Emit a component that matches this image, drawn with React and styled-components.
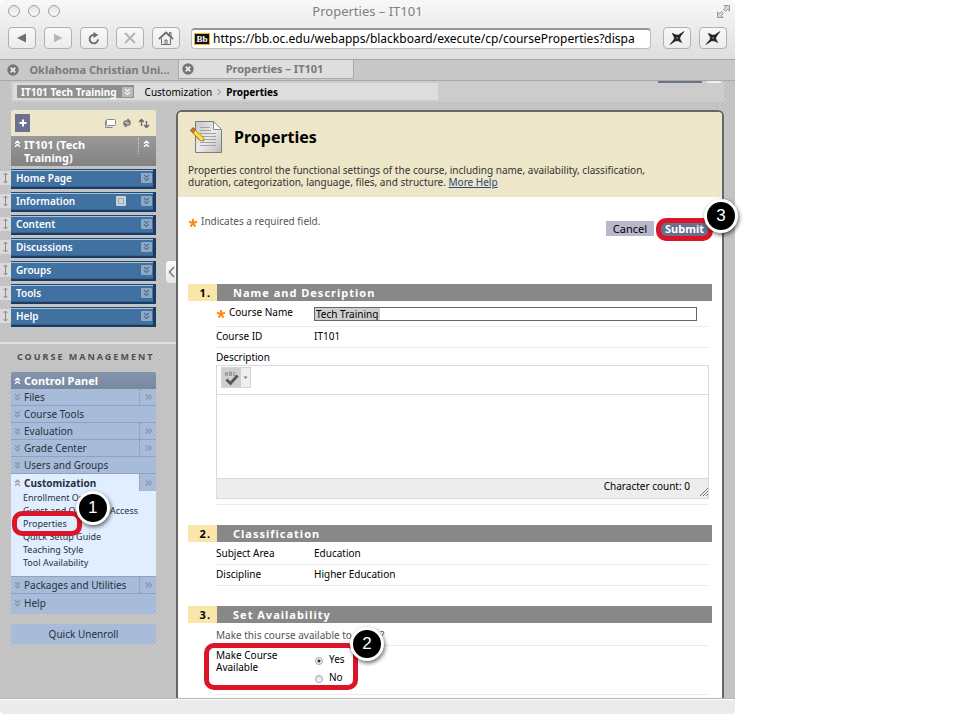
import { useState } from "react";
import styled, { createGlobalStyle, css } from "styled-components";

const COLORS = {
  beige: "#ede6c8",
  bar: "#888888",
  blue: "#4071a1",
  panel: "#a8bbd9",
  open: "#e0eeff",
  red: "#dc1428",
  frame: "#666666",
};

const GlobalStyle = createGlobalStyle`
  * {
    box-sizing: border-box;
  }
  body {
    margin: 0;
    background: #ffffff;
    color: #000000;
    font-family: "Noto Sans", sans-serif;
    font-size: 10px;
    line-height: 12px;
  }
  button, input, textarea {
    font: inherit;
    color: inherit;
    margin: 0;
    padding: 0;
    border: 0;
    background: none;
  }
  a {
    color: inherit;
    text-decoration: none;
  }
  svg {
    display: block;
    flex: none;
  }
  h1, h2, h3, p, ul, dl, dd {
    margin: 0;
    padding: 0;
    list-style: none;
  }
`;

const stripes = css`
  background: linear-gradient(
      135deg,
      #bebebe 25%,
      #c9c9c9 25% 50%,
      #bebebe 50% 75%,
      #c9c9c9 75%
    )
    0 0 / 4px 4px;
`;

const Desktop = styled.div`
  height: 100vh;
  padding-right: 235px;
`;

const Window = styled.div`
  display: flex;
  flex-direction: column;
  height: 100%;
  border-radius: 5px 5px 4px 4px;
`;

/* browser chrome */

const Chrome = styled.header`
  flex: none;
  background: linear-gradient(#f8f8f8, #dedede);
  border-bottom: 1px solid #a6a6a6;
  border-radius: 5px 5px 0 0;
`;

const TitleBar = styled.div`
  display: grid;
  grid-template-columns: 60px 1fr 64px;
  align-items: center;
  height: 24px;
  padding: 0 4px 2px 8px;
  color: #808080;
  font-size: 13px;
  line-height: 16px;
  text-align: center;
`;

const Lights = styled.div`
  display: flex;
  gap: 8px;
`;

const Light = styled.button`
  width: 12px;
  height: 12px;
  border: 1px solid #a2a2a2;
  border-radius: 50%;
  background: linear-gradient(#e2e2e2, #fafafa);
`;

const Expand = styled.button`
  justify-self: end;
`;

const Toolbar = styled.div`
  display: flex;
  align-items: center;
  gap: 8px;
  height: 35px;
  padding: 0 8px 8px;
`;

const ToolButton = styled.button`
  display: flex;
  flex: none;
  align-items: center;
  justify-content: center;
  width: 28px;
  height: 22px;
  margin-top: 1px;
  border: 1px solid #b0b0b0;
  border-radius: 4px;
  background: linear-gradient(#f8f8f8, #ececec);
`;

const Address = styled.label`
  display: flex;
  flex: 1;
  align-items: center;
  gap: 3px;
  min-width: 0;
  height: 21px;
  margin: 1px 4px 0 3px;
  padding: 0 1px 0 2px;
  border: 1px solid #bdbdbd;
  border-top: 2px solid #969696;
  border-radius: 4px;
  background: #ffffff;
`;

const Favicon = styled.span`
  flex: none;
  width: 16px;
  height: 12px;
  border: 1px solid #e6b222;
  background: #111111;
  color: #ffffff;
  font: bold 9px/10px "Liberation Serif", serif;
  text-align: center;
`;

const AddressInput = styled.input`
  flex: 1;
  min-width: 0;
  outline: none;
  font-size: 12px;
  line-height: 16px;
`;

const Tabs = styled.nav`
  display: flex;
  flex: none;
  height: 21px;
  border-bottom: 1px solid #a9a9a9;
  background: #c8c8c8;
`;

const Tab = styled.div`
  display: flex;
  align-items: center;
  gap: 6px;
  width: ${(props) => (props.$active ? 176 : 178)}px;
  height: ${(props) => (props.$active ? 19 : 20)}px;
  padding: 0 4px 0 7px;
  background: ${(props) => (props.$active ? "#dedede" : "#c8c8c8")};
  border: solid #a9a9a9;
  border-width: ${(props) => (props.$active ? "0 1px 1px" : "0")};
  color: #7a7a7a;
  font-size: 11px;
  font-weight: 700;
  white-space: nowrap;

  ${(props) => props.$active && "padding-left: 3px;"}
  a {
    flex: 1;
    text-align: center;
  }
`;

/* page */

const Page = styled.div`
  flex: 1;
  min-height: 0;
  overflow-x: visible;
  overflow-y: clip;
  ${stripes}
`;

const CrumbBar = styled.div`
  display: flex;
  justify-content: space-between;
  height: 21px;
  margin: 0 11px 0 11px;
  padding: 2px 3px 0 2px;
  background: #cccccc;
`;

const Crumbs = styled.nav`
  display: flex;
  align-items: center;
  width: 425px;
  height: 17px;
  padding-left: 4px;
  background: #dddddd;
  white-space: nowrap;
`;

const CourseCrumb = styled.button`
  display: flex;
  align-items: center;
  gap: 5px;
  height: 13px;
  margin-right: 11px;
  padding: 0 1px 0 4px;
  background: #909090;
  color: #ffffff;
  font-weight: 700;
`;

const Stubs = styled.div`
  display: flex;
  gap: 5px;
  margin-top: -2px;
`;

const Stub = styled.i`
  width: ${(props) => props.$width}px;
  height: 2px;
  background: ${(props) => props.$color};
`;

const Columns = styled.div`
  display: flex;
  align-items: stretch;
  height: calc(100% - 21px);
  padding: 8px 11px 0 0;
`;

const Sidebar = styled.aside`
  flex: none;
  width: 176px;
  position: relative;
`;

const Collapse = styled.button`
  display: flex;
  align-items: center;
  justify-content: center;
  position: absolute;
  right: 0;
  top: 151px;
  width: 10px;
  height: 22px;
  border-radius: 4px 0 0 4px;
  background: linear-gradient(#fdfdfd, #e6e6e6);
`;

const MenuTop = styled.div`
  display: flex;
  align-items: center;
  gap: 6px;
  height: 26px;
  margin: 0 20px 0 11px;
  padding: 0 6px 0 4px;
  border-radius: 2px 2px 0 0;
  background: ${COLORS.beige};
`;

const AddButton = styled.button`
  display: flex;
  align-items: center;
  justify-content: center;
  width: 15px;
  height: 18px;
  margin-right: auto;
  background: #6d7190;
`;

const CourseHead = styled.h3`
  display: flex;
  align-items: flex-start;
  gap: 3px;
  height: 30px;
  margin: 0 20px 3px 11px;
  padding: 2px 6px 0 3px;
  background: linear-gradient(#999999, #828282);
  color: #ffffff;
  font-size: 11px;
  line-height: 13px;

  span {
    flex: 1;
  }
  svg {
    margin-top: 2px;
  }
`;

const HeadToggle = styled.span`
  && {
    flex: none;
    height: 16px;
    padding-left: 4px;
    border-left: 1px dotted #cccccc;
  }
`;

const MenuRow = styled.li`
  display: flex;
  height: 20px;
  margin: 0 20px 3px 0;
`;

const Grip = styled.span`
  display: flex;
  align-items: center;
  justify-content: center;
  width: 11px;
  height: 14px;
  margin-top: 2px;
  background: #dadada;
`;

const MenuItem = styled.div`
  display: flex;
  flex: 1;
  align-items: center;
  gap: 15px;
  padding: 0 1px 2px 5px;
  border-top: 1px solid #1f4a76;
  border-right: 3px solid #1b3b60;
  border-bottom: 2px solid #1b3b60;
  background: ${COLORS.blue};
  box-shadow: inset 0 1px #a9c3dc, inset 0 -1px #336294;
  color: #ffffff;
  font-weight: 600;

  a {
    flex: 1;
  }
`;

const Rule = styled.hr`
  height: 2px;
  margin: 15px 0 0;
  border: 0;
  background: #dedede;
`;

const ManagementTitle = styled.h3`
  margin: 7px 0 9px 17px;
  color: #505050;
  font-size: 9px;
  font-weight: 700;
  line-height: 12px;
  letter-spacing: 2px;
  white-space: nowrap;
`;

const Panel = styled.div`
  margin: 0 20px 0 11px;
  border-radius: 2px;
  background: ${COLORS.panel};
  color: #26313f;
`;

const PanelRow = styled.div`
  display: flex;
  align-items: center;
  gap: 3px;
  height: 17px;
  padding-left: 3px;
  border-bottom: ${(props) => (props.$plain ? "0" : "1px solid #8ea3c4")};
  background: ${(props) => (props.$open ? COLORS.open : "transparent")};
  font-weight: ${(props) => (props.$open ? 700 : 400)};

  a {
    flex: 1;
  }
  &:last-child {
    margin-bottom: 3px;
  }
`;

const PanelHead = styled(PanelRow)`
  background: linear-gradient(#8394ad, #78899f);
  border-bottom: 0;
  border-radius: 2px 2px 0 0;
  color: #ffffff;
  font-size: 11px;
  font-weight: 700;
`;

const PanelFoot = styled.div`
  height: 3px;
`;

const More = styled.button`
  display: flex;
  align-items: center;
  justify-content: center;
  align-self: stretch;
  width: 17px;
  border-left: 1px dotted #8094b4;
  background: ${COLORS.panel};
`;

const SubList = styled.ul`
  height: 86px;
  padding-left: 12px;
  border-bottom: 1px solid #8ea3c4;
  background: ${COLORS.open};
  font-size: 9px;
  line-height: 13px;
`;

const SubItem = styled.li`
  position: relative;
  width: max-content;
`;

const Unenroll = styled.button`
  width: 145px;
  height: 20px;
  margin: 10px 0 0 11px;
  border-radius: 2px;
  background: ${COLORS.panel};
  color: #26313f;
`;

/* numbered callouts that lie over the page */

const Ring = styled.i`
  position: absolute;
  z-index: 1;
  inset: ${(props) => props.$inset};
  border: 5px solid ${COLORS.red};
  border-radius: 10px;
  pointer-events: none;
`;

const Badge = styled.b`
  position: absolute;
  z-index: 2;
  top: ${(props) => props.$top}px;
  right: ${(props) => props.$right}px;
  width: 34px;
  height: 34px;
  border: 3px solid #ffffff;
  border-radius: 50%;
  background: #000000;
  box-shadow: 1px 2px 4px rgba(0, 0, 0, 0.6);
  color: #ffffff;
  font: 17px/28px "Liberation Sans", sans-serif;
  text-align: center;
`;

/* main column */

const Main = styled.main`
  flex: 1;
  min-width: 0;
  border: 2px solid ${COLORS.frame};
  border-bottom: 0;
  border-radius: 6px 6px 0 0;
  background: #ffffff;
`;

const Intro = styled.div`
  height: 85px;
  padding: 9px 10px 0;
  border-radius: 4px 4px 0 0;
  background: ${COLORS.beige};
  color: #333333;
`;

const Heading = styled.div`
  display: flex;
  align-items: center;
  gap: 11px;
  height: 32px;
  margin: 0 0 11px 2px;
  color: #000000;

  h1 {
    font-size: 16px;
    line-height: 20px;
  }
`;

const HelpLink = styled.a`
  color: #2a4a76;
  text-decoration: underline;
`;

const Actions = styled.div`
  display: flex;
  align-items: flex-start;
  justify-content: space-between;
  height: 87px;
  padding: 18px 14px 0 10px;
  color: #555555;
`;

const Required = styled.p`
  display: flex;
  align-items: flex-start;
  gap: 3px;

  svg {
    margin-top: 3px;
  }
`;

const Buttons = styled.div`
  display: flex;
  gap: 7px;
  padding-top: 6px;
`;

const Action = styled.button`
  position: relative;
  height: 15px;
  padding: 0 ${(props) => (props.$primary ? 4 : 7)}px;
  background: ${(props) => (props.$primary ? "#66708c" : "#b9b7cd")};
  color: ${(props) => (props.$primary ? "#ffffff" : "#000000")};
  font-size: 11px;
  font-weight: ${(props) => (props.$primary ? 700 : 400)};
`;

const SectionHead = styled.h2`
  display: flex;
  height: 17px;
  margin: 0 10px;
  background: ${COLORS.bar};
  color: #ffffff;
  font-size: 11px;
  font-weight: 700;
  line-height: 17px;
  letter-spacing: 1px;

  span {
    width: 29px;
    margin-right: 16px;
    padding-right: 6px;
    background: #fae6a8;
    color: #000000;
    text-align: right;
  }
`;

const SectionBody = styled.div`
  margin: 0 13px 0 38px;
  padding-bottom: 20px;
`;

const Field = styled.div`
  display: grid;
  grid-template-columns: 98px 1fr;
  min-height: ${(props) => props.$height || 21}px;
  padding: ${(props) => props.$pad || 3}px 0 0;
  border-bottom: 1px solid #ececec;
`;

const FieldLabel = styled.label`
  display: flex;
  align-items: flex-start;
  gap: 3px;

  svg {
    margin-top: 3px;
  }
`;

const NameInput = styled.input`
  width: 383px;
  max-width: 100%;
  height: 14px;
  margin-top: 1px;
  padding-left: 1px;
  border: 1px solid #666666;
  outline: none;
  background: linear-gradient(#d0d0d0, #d0d0d0) no-repeat 0 0 / 65px 100%;
`;

const DescriptionLabel = styled.label`
  display: block;
  padding: 3px 0 2px;
`;

const Editor = styled.div`
  border: 1px solid #dadada;
`;

const EditorTools = styled.div`
  height: 29px;
  padding: 1px 4px;
  border-bottom: 1px solid #dadada;
`;

const SpellButton = styled.button`
  display: flex;
  width: 30px;
  height: 21px;
  border: 1px solid #d4d4d4;
  background: #eeeeee;
`;

const EditorText = styled.textarea`
  display: block;
  width: 100%;
  height: 83px;
  outline: none;
  resize: none;
`;

const EditorFoot = styled.div`
  display: flex;
  justify-content: flex-end;
  gap: 10px;
  height: 20px;
  padding: 1px 0 2px;
  border-top: 1px solid #dadada;
  background: #ededed;

  svg {
    align-self: flex-end;
  }
`;

const EditorEnd = styled.div`
  height: 6px;
  border-bottom: 1px solid #ececec;
`;

const Question = styled.p`
  height: 23px;
  padding-top: 6px;
  border-bottom: 1px solid #ececec;
  color: #555555;
`;

const Choice = styled.fieldset`
  display: grid;
  grid-template-columns: 98px 1fr;
  position: relative;
  height: 49px;
  margin: 0;
  padding: 3px 0 0;
  border: 0;
  border-bottom: 1px solid #ececec;

  div {
    display: flex;
    flex-direction: column;
    gap: 6px;
    padding-top: 4px;
  }
  label {
    display: flex;
    align-items: center;
    gap: 6px;
    width: max-content;
  }
`;

const Radio = styled.input`
  appearance: none;
  width: 8px;
  height: 8px;
  margin: 4px 0 0 1px;
  border: 1px solid #a2a2a2;
  border-radius: 50%;
  background: ${(props) =>
    props.checked
      ? "radial-gradient(#333333 0 1px, #f4f4f4 2px)"
      : "linear-gradient(#dddddd, #ffffff)"};
`;

const StatusBar = styled.footer`
  flex: none;
  height: 16px;
  border-top: 1px solid #b5b5b5;
  border-radius: 0 0 4px 4px;
  background: #ebebeb;
  box-shadow: inset 0 1px #ffffff;
`;

/* icons */

const Chevrons = ({ color = "#ffffff", turn = 0 }) => (
  <svg width="7" height="8" viewBox="0 0 7 8">
    <path
      d="M1 3.5 3.5 1.2 6 3.5M1 6.7 3.5 4.4 6 6.7"
      fill="none"
      stroke={color}
      strokeWidth="1.4"
      transform={`rotate(${turn} 3.5 4)`}
    />
  </svg>
);

const DropChevron = ({ back = "#8fa9c4", ink = "#4f7396" }) => (
  <svg width="11" height="10" viewBox="0 0 11 10">
    <rect width="11" height="10" rx="1" fill={back} />
    <path d="M3 2 5.5 4.3 8 2M3 5.2 5.5 7.5 8 5.2" fill="none" stroke={ink} strokeWidth="1.2" />
  </svg>
);

const Star = () => (
  <svg width="10" height="10" viewBox="0 0 10 10">
    <path d="M5 5V1M5 5 1 3.8M5 5l4-1.2M5 5 2.6 8.6M5 5l2.4 3.6" stroke="#ff8a0c" strokeWidth="2" />
  </svg>
);

const CloseDot = () => (
  <svg width="12" height="12" viewBox="0 0 12 12">
    <circle cx="6" cy="6" r="5.7" fill="#757575" />
    <path d="m3.7 3.7 4.6 4.6m0-4.6L3.7 8.3" stroke="#eeeeee" strokeWidth="1.7" />
  </svg>
);

const Needle = () => (
  <svg width="16" height="16" viewBox="0 0 16 16">
    <path
      d="M15 1.5 11 7l-.2 2 2 3.5-3.800-1.7-2.600.1L1 14.5l4.200-5.3.1-2L3.200 3.300l4 1.800 2.300-.1z"
      fill="#222222"
      stroke="#222222"
      strokeWidth=".6"
    />
    <circle cx="8" cy="8" r="1" fill="#777777" />
  </svg>
);

const NotePad = () => (
  <svg width="33" height="32" viewBox="0 0 33 32">
    <defs>
      <linearGradient id="sheet" x1="0" y1="0" x2="1" y2="1">
        <stop offset="0" stopColor="#c4c4c4" />
        <stop offset=".5" stopColor="#ececec" />
        <stop offset="1" stopColor="#b8b8b8" />
      </linearGradient>
    </defs>
    <path d="M5.5 .5h18l8 8v23h-26z" fill="url(#sheet)" stroke="#7d7d7d" />
    <path d="M23.5 .5v8h8z" fill="#fdfdfd" stroke="#8a8a8a" />
    <path
      d="M10 6.5h10M10 9.5h11M10 12.5h16M10 15.5h16M10 18.5h16M10 21.5h16M10 24.5h16"
      stroke="#a2a2a2"
    />
    <path d="M3 10.5 12.5 20l-3.800-1L.8 10z" fill="#c8941f" />
    <path d="m3.2 7 10.3 9.8L14 20l-3.5-.4L.6 9.5z" fill="#fbdd45" stroke="#8c6a17" strokeWidth=".7" />
    <path d="M3.2 6.5 5.5 9 2.9 11.8.5 9.2z" fill="#e0731d" stroke="#8c4a17" strokeWidth=".7" />
  </svg>
);

const MENU = ["Home Page", "Information", "Content", "Discussions", "Groups", "Tools", "Help"];

const PANEL = [
  { name: "Files", more: true },
  { name: "Course Tools" },
  { name: "Evaluation", more: true },
  { name: "Grade Center", more: true },
  { name: "Users and Groups" },
];

const CUSTOMIZATION = [
  "Enrollment Options",
  "Guest and Observer Access",
  "Properties",
  "Quick Setup Guide",
  "Teaching Style",
  "Tool Availability",
];

const PanelEntry = ({ name, more, open, plain }) => (
  <PanelRow $open={open} $plain={plain || open}>
    <Chevrons color={open ? "#9aa2ae" : "#8b98ad"} turn={open ? 0 : 180} />
    <a href="#panel">{name}</a>
    {more && (
      <More aria-label={`${name} page`}>
        <Chevrons color="#8b98ad" turn={90} />
      </More>
    )}
  </PanelRow>
);

const Browser = () => (
  <>
    <Chrome>
      <TitleBar>
        <Lights>
          <Light aria-label="Close" />
          <Light aria-label="Minimize" />
          <Light aria-label="Zoom" />
        </Lights>
        <span>Properties – IT101</span>
        <Expand aria-label="Full screen">
          <svg width="15" height="15" viewBox="0 0 15 15" fill="#d8d8d8" stroke="#979797">
            <path d="M8 1.5h5.5V7l-1.8-1.7L9.5 7.5l-2-2 2.2-2.2z" />
            <path d="M7 13.5H1.5V8l1.8 1.7 2.2-2.2 2 2-2.2 2.2z" />
          </svg>
        </Expand>
      </TitleBar>
      <Toolbar>
        <ToolButton aria-label="Back">
          <svg width="10" height="10" viewBox="0 0 10 10">
            <path d="M9 .5v9L0 5z" fill="#707070" />
          </svg>
        </ToolButton>
        <ToolButton aria-label="Forward">
          <svg width="10" height="10" viewBox="0 0 10 10">
            <path d="M1 .8v8.4L9.5 5z" fill="#b5b5b5" />
          </svg>
        </ToolButton>
        <ToolButton aria-label="Reload">
          <svg width="14" height="14" viewBox="0 0 14 14">
            <path d="M11 8.2A4.2 4.2 0 1 1 7.5 4" fill="none" stroke="#6b6b6b" strokeWidth="1.8" />
            <path d="M6.5 1v6l4.8-3z" fill="#6b6b6b" />
          </svg>
        </ToolButton>
        <ToolButton aria-label="Stop">
          <svg width="12" height="12" viewBox="0 0 12 12">
            <path d="m1 1 10 10M11 1 1 11" stroke="#b5b5b5" strokeWidth="2" />
          </svg>
        </ToolButton>
        <ToolButton aria-label="Home">
          <svg width="16" height="15" viewBox="0 0 16 15" fill="none" stroke="#6b6b6b">
            <path d="M1 8 8 1.5 15 8" strokeWidth="1.8" />
            <path d="M3.5 7.5v6h9v-6M11.5 4V1.5H13V6" />
            <path d="M7 13.5V9h2v4.5" />
          </svg>
        </ToolButton>
        <Address>
          <Favicon>Bb</Favicon>
          <AddressInput
            aria-label="Address"
            defaultValue="https://bb.oc.edu/webapps/blackboard/execute/cp/courseProperties?dispa"
          />
        </Address>
        <ToolButton aria-label="Bookmark one">
          <Needle />
        </ToolButton>
        <ToolButton aria-label="Bookmark two">
          <Needle />
        </ToolButton>
      </Toolbar>
    </Chrome>
    <Tabs>
      <Tab>
        <CloseDot />
        <a href="#oc">Oklahoma Christian Uni...</a>
      </Tab>
      <Tab $active>
        <CloseDot />
        <a href="#properties">Properties – IT101</a>
      </Tab>
    </Tabs>
  </>
);

const CourseMenu = () => (
  <Sidebar>
    <MenuTop>
      <AddButton aria-label="Add menu item">
        <svg width="8" height="8" viewBox="0 0 8 8">
          <path d="M4 .5v7M.5 4h7" stroke="#ffffff" strokeWidth="2" />
        </svg>
      </AddButton>
      <svg width="11" height="10" viewBox="0 0 11 10" fill="#ffffff" stroke="#8a8a8a">
        <path d="M.5 2.5v7h7" fill="none" />
        <rect x="1.5" y="1.5" width="9" height="6" rx="1" />
      </svg>
      <svg width="10" height="10" viewBox="0 0 10 10" fill="none" stroke="#777777" strokeWidth="1.5">
        <path d="M2 6.5V5a2 2 0 0 1 2-2h3M5.5 1l2 2-2 2M8 3.5V5a2 2 0 0 1-2 2H3M4.5 5l-2 2 2 2" />
      </svg>
      <svg width="12" height="11" viewBox="0 0 12 11" fill="none" stroke="#666666" strokeWidth="1.3">
        <path d="M3.5 8V1.5M1 4l2.5-2.5L6 4M8.5 3v6.5M6 7l2.5 2.5L11 7" />
      </svg>
    </MenuTop>
    <CourseHead>
      <Chevrons />
      <span>
        IT101 (Tech
        <br />
        Training)
      </span>
      <HeadToggle>
        <Chevrons />
      </HeadToggle>
    </CourseHead>
    <ul>
      {MENU.map((name) => (
        <MenuRow key={name}>
          <Grip>
            <svg width="5" height="12" viewBox="0 0 5 12" stroke="#8a8a8a" fill="none">
              <path d="M2.5 1v10M.5 3l2-2 2 2M.5 9l2 2 2-2" />
            </svg>
          </Grip>
          <MenuItem>
            <a href="#menu">{name}</a>
            {name === "Information" && (
              <svg width="10" height="10" viewBox="0 0 10 10">
                <rect width="10" height="10" rx="1" fill="#c9d3dc" />
                <rect x="2.5" y="2.5" width="5" height="5" fill="none" stroke="#77838f" strokeDasharray="1 1" />
              </svg>
            )}
            <DropChevron />
          </MenuItem>
        </MenuRow>
      ))}
    </ul>
    <Rule />
    <ManagementTitle>COURSE MANAGEMENT</ManagementTitle>
    <Panel>
      <PanelHead>
        <Chevrons />
        <span>Control Panel</span>
      </PanelHead>
      {PANEL.map((entry) => (
        <PanelEntry key={entry.name} {...entry} />
      ))}
      <PanelEntry name="Customization" more open />
      <SubList>
        {CUSTOMIZATION.map((name) => (
          <SubItem key={name}>
            <a href="#customization">{name}</a>
            {name === "Properties" && (
              <>
                <Ring $inset="-6px -15px -6px -11px" />
                <Badge $top={-26} $right={-43}>
                  1
                </Badge>
              </>
            )}
          </SubItem>
        ))}
      </SubList>
      <PanelEntry name="Packages and Utilities" more />
      <PanelEntry name="Help" plain />
      <PanelFoot />
    </Panel>
    <Unenroll>Quick Unenroll</Unenroll>
    <Collapse aria-label="Hide course menu">
      <svg width="7" height="12" viewBox="0 0 7 12">
        <path d="M6 1 1.5 6 6 11" fill="none" stroke="#777777" strokeWidth="1.5" />
      </svg>
    </Collapse>
  </Sidebar>
);

const PropertiesForm = () => {
  const [courseName, setCourseName] = useState("Tech Training");
  const [description, setDescription] = useState("");
  const [available, setAvailable] = useState("Yes");

  return (
    <Main>
      <Intro>
        <Heading>
          <NotePad />
          <h1>Properties</h1>
        </Heading>
        <p>
          Properties control the functional settings of the course, including name, availability, classification,
          <br />
          duration, categorization, language, files, and structure. <HelpLink href="#help">More Help</HelpLink>
        </p>
      </Intro>
      <Actions>
        <Required>
          <Star />
          Indicates a required field.
        </Required>
        <Buttons>
          <Action>Cancel</Action>
          <Action $primary>
            Submit
            <Ring $inset="-3px -5px -5px" />
            <Badge $top={-22} $right={-30}>
              3
            </Badge>
          </Action>
        </Buttons>
      </Actions>

      <SectionHead>
        <span>1.</span>Name and Description
      </SectionHead>
      <SectionBody>
        <Field $height={26} $pad={5}>
          <FieldLabel htmlFor="course-name">
            <Star />
            Course Name
          </FieldLabel>
          <NameInput
            id="course-name"
            value={courseName}
            onChange={({ target }) => setCourseName(target.value)}
          />
        </Field>
        <Field>
          <span>Course ID</span>
          <span>IT101</span>
        </Field>
        <DescriptionLabel htmlFor="description">Description</DescriptionLabel>
        <Editor>
          <EditorTools>
            <SpellButton aria-label="Check spelling">
              <svg width="28" height="19" viewBox="0 0 28 19">
                <rect width="19" height="19" fill="#cfcfcf" />
                <path
                  d="M3.5 8V4.5h2V8M3.5 6.5h2M7.5 4v3.5h2V4zM7.5 5.7h2M13.5 4.5h-2v3h2"
                  fill="none"
                  stroke="#888888"
                  strokeWidth=".8"
                />
                <path d="m4.5 11.5 4 4 7-8" fill="none" stroke="#555555" strokeWidth="2.8" />
                <path d="M21.5 8.5h4L23.5 11z" fill="#777777" />
              </svg>
            </SpellButton>
          </EditorTools>
          <EditorText
            id="description"
            value={description}
            onChange={({ target }) => setDescription(target.value)}
          />
          <EditorFoot>
            <span>Character count: {description.length}</span>
            <svg width="8" height="8" viewBox="0 0 8 8">
              <path d="M0 8 8 0M3 8l5-5M6 8l2-2" stroke="#777777" />
            </svg>
          </EditorFoot>
        </Editor>
        <EditorEnd />
      </SectionBody>

      <SectionHead>
        <span>2.</span>Classification
      </SectionHead>
      <SectionBody>
        <Field $height={23} $pad={5}>
          <span>Subject Area</span>
          <span>Education</span>
        </Field>
        <Field>
          <span>Discipline</span>
          <span>Higher Education</span>
        </Field>
      </SectionBody>

      <SectionHead>
        <span>3.</span>Set Availability
      </SectionHead>
      <SectionBody>
        <Question>Make this course available to users?</Question>
        <Choice>
          <span>
            Make Course
            <br />
            Available
          </span>
          <div>
            {["Yes", "No"].map((value) => (
              <label key={value}>
                <Radio
                  type="radio"
                  name="available"
                  checked={available === value}
                  onChange={() => setAvailable(value)}
                />
                {value}
              </label>
            ))}
          </div>
          <Ring $inset="-3px 351px 4px -12px" />
          <Badge $top={-19} $right={325}>
            2
          </Badge>
        </Choice>
      </SectionBody>
    </Main>
  );
};

const App = () => (
  <Desktop>
    <GlobalStyle />
    <Window>
      <Browser />
      <Page>
        <CrumbBar>
          <Crumbs>
            <CourseCrumb>
              IT101 Tech Training
              <DropChevron back="#b9b9b9" ink="#f2f2f2" />
            </CourseCrumb>
            <a href="#customization">Customization</a>
            <svg width="14" height="8" viewBox="0 0 14 8">
              <path d="m5.500 1 3 3-3 3" fill="none" stroke="#888888" />
            </svg>
            <b>Properties</b>
          </Crumbs>
          <Stubs>
            <Stub $width={44} $color="#6b7685" />
            <Stub $width={14} $color="#eeeeee" />
          </Stubs>
        </CrumbBar>
        <Columns>
          <CourseMenu />
          <PropertiesForm />
        </Columns>
      </Page>
      <StatusBar />
    </Window>
  </Desktop>
);

export default App;
